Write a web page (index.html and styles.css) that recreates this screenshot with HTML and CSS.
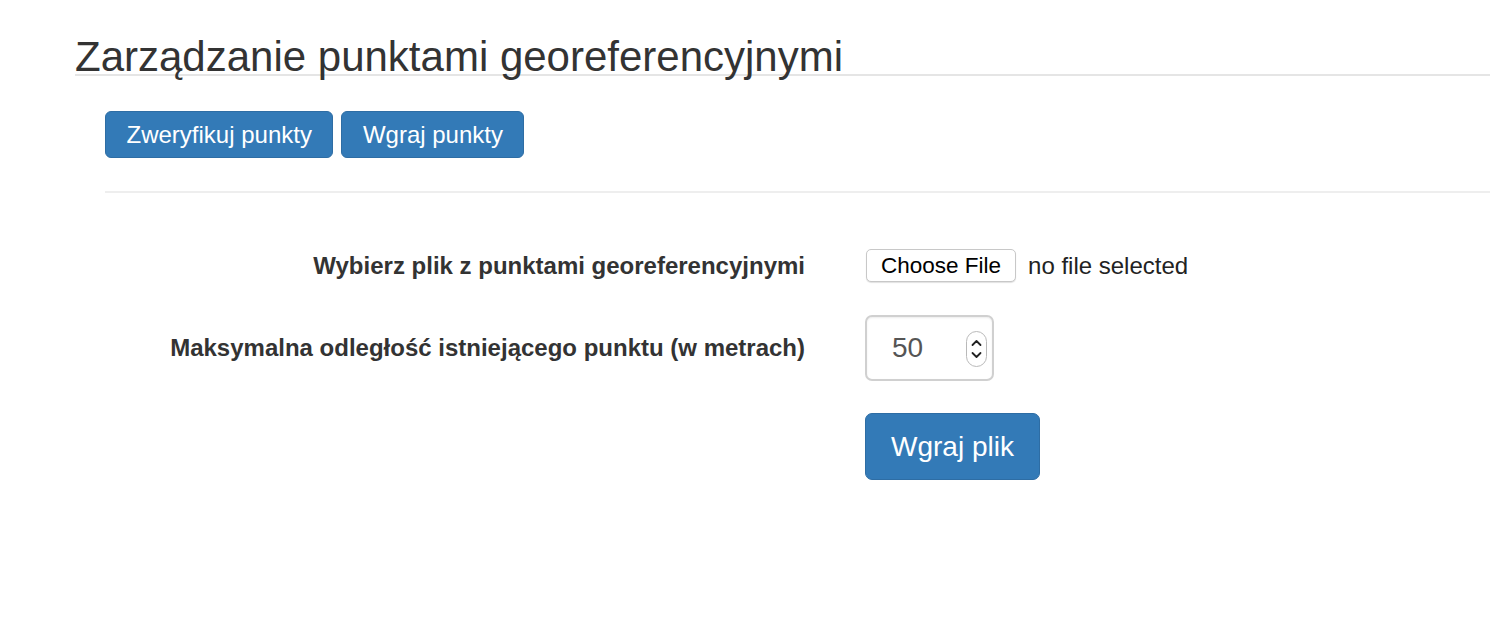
FILE: index.html
```html
<!DOCTYPE html>
<html lang="pl">
<head>
<meta charset="utf-8">
<title>Zarządzanie punktami georeferencyjnymi</title>
<link rel="stylesheet" href="styles.css">
</head>
<body>
<div class="page">
  <h1 class="title">Zarządzanie punktami georeferencyjnymi</h1>
  <div class="content">
    <div class="actions">
      <button class="btn">Zweryfikuj punkty</button>
      <button class="btn">Wgraj punkty</button>
    </div>
    <hr class="divider">
    <form class="form">
      <label class="form-label">Wybierz plik z punktami georeferencyjnymi</label>
      <div class="file-field">
        <span class="file-btn">Choose File</span>
        <span class="file-name">no file selected</span>
      </div>

      <label class="form-label">Maksymalna odległość istniejącego punktu (w metrach)</label>
      <div class="num-input">
        <span class="num-value">50</span>
        <svg class="spinner" width="21" height="36" viewBox="0 0 21 36">
          <rect x="0.5" y="0.5" width="20" height="35" rx="10" ry="10" fill="#fff" stroke="#b9b9b9"/>
          <path d="M6.5 14 L10.5 10 L14.5 14" fill="none" stroke="#222" stroke-width="1.8" stroke-linecap="round" stroke-linejoin="round"/>
          <path d="M6.5 22 L10.5 26 L14.5 22" fill="none" stroke="#222" stroke-width="1.8" stroke-linecap="round" stroke-linejoin="round"/>
        </svg>
      </div>

      <span class="spacer"></span>
      <div class="submit-cell">
        <button type="button" class="btn btn-lg">Wgraj plik</button>
      </div>
    </form>
  </div>
</div>
</body>
</html>
```

FILE: styles.css
```css
html, body {
  margin: 0;
  padding: 0;
  background: #fff;
}

body {
  font-family: "Liberation Sans", Arial, Helvetica, sans-serif;
  color: #333;
  overflow: hidden;
}

.page {
  padding-left: 75px;
  padding-top: 39px;
}

.title {
  margin: 0;
  font-size: 42px;
  font-weight: 400;
  line-height: 35px;
  color: #333;
  border-bottom: 2px solid #e5e5e5;
}

.content {
  padding-left: 30px;
}

.actions {
  display: flex;
  gap: 8px;
  margin-top: 35px;
}

.btn {
  font-family: "Liberation Sans", Arial, Helvetica, sans-serif;
  font-size: 24px;
  line-height: 35px;
  padding: 5px 20.5px;
  color: #fff;
  background: #337ab7;
  border: 1px solid #2e6da4;
  border-radius: 6px;
  cursor: pointer;
}

.btn-lg {
  font-size: 28px;
  line-height: 41px;
  padding: 12px 25px;
  border-radius: 7px;
}

.divider {
  margin: 33px 0 0;
  border: 0;
  border-top: 2px solid #eee;
  height: 0;
}

.form {
  display: grid;
  grid-template-columns: 700px auto;
  column-gap: 60px;
  row-gap: 32px;
  align-items: center;
  margin-top: 55px;
}

.form-label {
  text-align: right;
  font-weight: 700;
  font-size: 24px;
  color: #333;
}

.file-field {
  display: flex;
  align-items: center;
  gap: 12px;
  height: 35px;
  padding-left: 1px;
}

.file-btn {
  display: inline-block;
  box-sizing: border-box;
  height: 33px;
  padding: 0 14px;
  line-height: 31px;
  font-size: 22.5px;
  color: #000;
  background: #fff;
  border: 1px solid #c8c8c8;
  border-radius: 5px;
  box-shadow: 0 1px 1px rgba(0, 0, 0, 0.12);
}

.file-name {
  font-size: 24px;
  color: #222;
}

.num-input {
  box-sizing: border-box;
  width: 129px;
  height: 66px;
  display: flex;
  align-items: center;
  justify-content: space-between;
  padding: 0 5px 0 25px;
  border: 2px solid #d0d0d0;
  border-radius: 7px;
  box-shadow: inset 0 1px 2px rgba(0, 0, 0, 0.08);
}

.num-value {
  font-size: 28px;
  color: #555;
}

.spinner {
  display: block;
  margin-top: 2px;
}

.submit-cell {
  display: flex;
}
```
